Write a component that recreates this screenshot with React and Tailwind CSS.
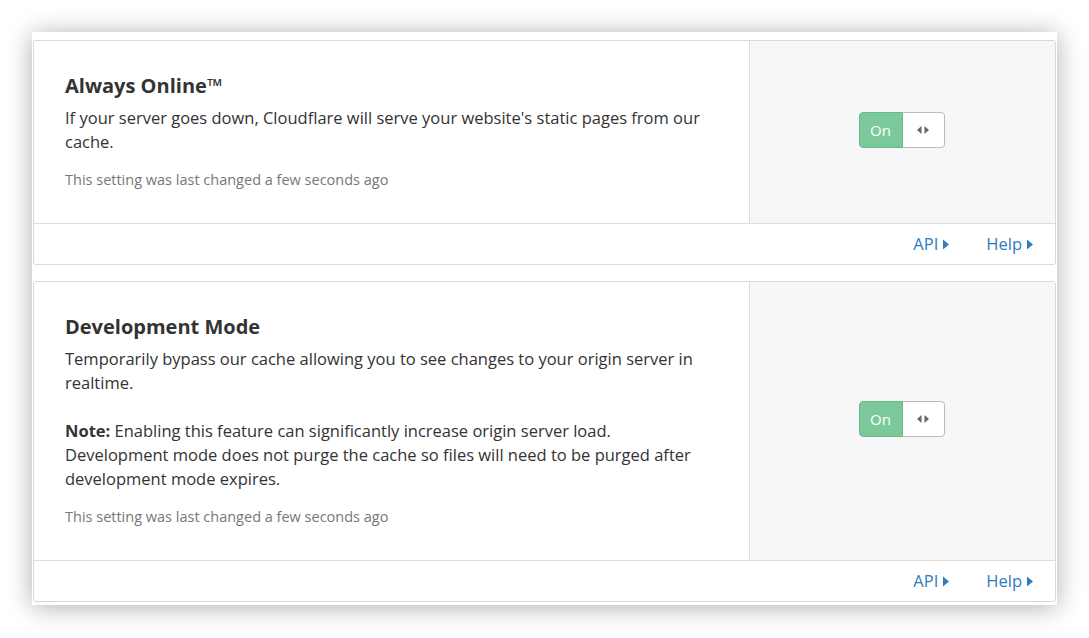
import React from 'react';

const font = { fontFamily: '"Open Sans", "Noto Sans", sans-serif' };

const Toggle = () => (
    <div className="flex h-[36px] mb-[4px] mr-[2px] rounded-[4px] overflow-hidden">
        <div className="w-[44px] bg-[#7bc99a] border border-[#6bb88a] rounded-l-[4px] flex items-center justify-center text-white text-[15px]">
            On
        </div>
        <div className="w-[42px] bg-white border border-l-0 border-[#bbbbbb] rounded-r-[4px] flex items-center justify-center">
            <svg width="14" height="10" viewBox="0 0 14 10">
                <path d="M5.5 1 L1 5 L5.5 9 Z" fill="#666" />
                <path d="M8.5 1 L13 5 L8.5 9 Z" fill="#666" />
            </svg>
        </div>
    </div>
);

const Caret = () => (
    <svg width="6" height="11" viewBox="0 0 6 11" className="ml-[5px]">
        <path d="M0 0.5 L6 5.5 L0 10.5 Z" fill="#2f7bbf" />
    </svg>
);

const SettingCard = ({ title, children }) => (
    <div className="border border-[#d9d9d9] rounded-[3px] bg-white">
        <div className="flex">
            <div className="flex-1 pl-[31px] pr-[32px] pt-[31px] pb-[33px] border-r border-[#dddddd]">
                <h3 className="text-[20px] font-bold text-[#333] leading-[28px] mb-[6px]">{title}</h3>
                {children}
                <p className="mt-[16px] text-[14.5px] leading-[20px] text-[#777]">
                    This setting was last changed a few seconds ago
                </p>
            </div>
            <div className="w-[305px] bg-[#f7f7f7] flex items-center justify-center">
                <Toggle />
            </div>
        </div>
        <div className="border-t border-[#dddddd] h-[41px] flex items-center justify-end pr-[22px] gap-[37px] text-[16.5px] text-[#2f7bbf]">
            <span className="flex items-center pt-[1px]">API<Caret /></span>
            <span className="flex items-center pt-[1px]">Help<Caret /></span>
        </div>
    </div>
);

export default function App() {
    return (
        <div className="w-[1089px] h-[638px] bg-white pt-[32px] pl-[32px]" style={font}>
            <div className="w-[1025px] h-[573px] bg-white shadow-[0_2px_24px_rgba(0,0,0,0.32)] pt-[8px] px-[1px] flex flex-col gap-[16px]">
                <SettingCard title="Always Online™">
                    <p className="text-[16.5px] leading-[24px] text-[#333]">
                        If your server goes down, Cloudflare will serve your website's static pages from our cache.
                    </p>
                </SettingCard>
                <SettingCard title="Development Mode">
                    <p className="text-[16.5px] leading-[24px] text-[#333]">
                        Temporarily bypass our cache allowing you to see changes to your origin server in realtime.
                    </p>
                    <p className="mt-[24px] text-[16.5px] leading-[24px] text-[#333]">
                        <b>Note:</b> Enabling this feature can significantly increase origin server load.
                        <br />
                        Development mode does not purge the cache so files will need to be purged after development mode expires.
                    </p>
                </SettingCard>
            </div>
        </div>
    );
}
